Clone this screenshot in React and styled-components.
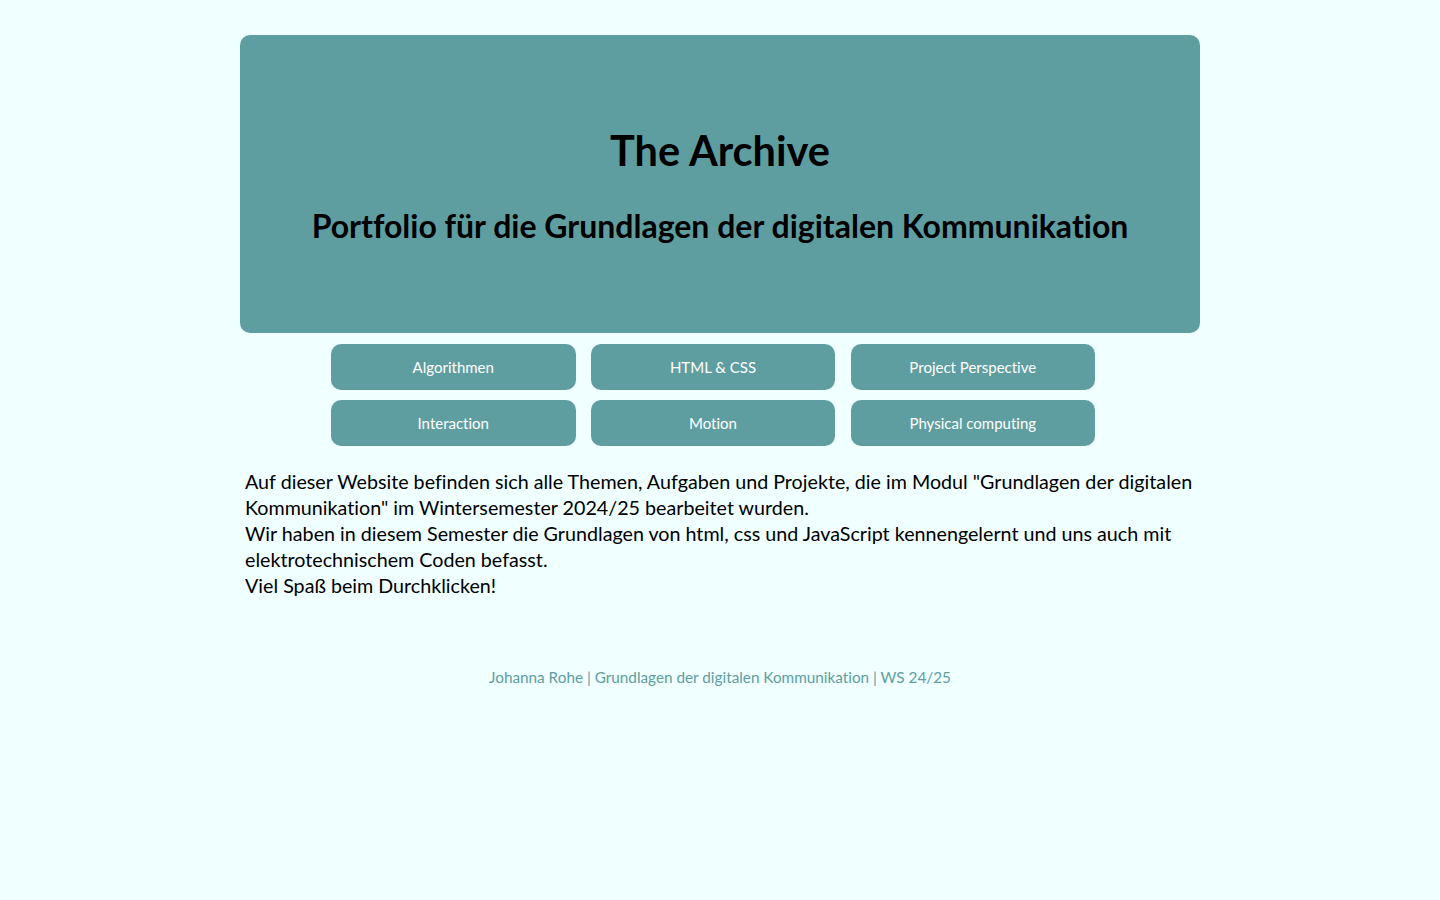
import React from "react";
import styled, { createGlobalStyle } from "styled-components";

const Global = createGlobalStyle`
  html, body { margin: 0; padding: 0; background: #F0FFFF; }
  body {
    font-family: Lato, "Noto Sans", sans-serif;
    color: #000;
    font-variant-ligatures: no-common-ligatures;
  }
`;

const Page = styled.div`
  width: 960px;
  margin: 0 auto;
  padding-top: 35px;
  display: flex;
  flex-direction: column;
  align-items: center;
`;

const Hero = styled.header`
  width: 100%;
  height: 298px;
  box-sizing: border-box;
  background: #5F9EA0;
  border-radius: 10px;
  display: flex;
  flex-direction: column;
  align-items: center;
  padding-top: 91px;
`;

const Title = styled.h1`
  margin: 0;
  font-size: 41.5px;
  font-weight: 700;
  line-height: 48px;
`;

const Subtitle = styled.h2`
  margin: 33px 0 0;
  font-size: 32px;
  font-weight: 700;
  line-height: 38px;
`;

const Nav = styled.nav`
  align-self: flex-start;
  margin: 11px 0 0 91px;
  display: grid;
  grid-template-columns: repeat(3, 244.5px);
  column-gap: 15.25px;
  row-gap: 10px;
`;

const NavButton = styled.a`
  height: 46px;
  border-radius: 10px;
  background: #5F9EA0;
  color: #fff;
  font-size: 15px;
  display: flex;
  align-items: center;
  justify-content: center;
  text-decoration: none;
  cursor: pointer;
`;

const Intro = styled.p`
  align-self: stretch;
  margin: 23px 0 0;
  padding: 0 5px;
  font-size: 19.7px;
  line-height: 26px;
`;

const Footer = styled.footer`
  margin-top: 68px;
  font-size: 15.3px;
  line-height: 20px;
  color: #5F9EA0;
  text-align: center;
`;

const links = [
  "Algorithmen",
  "HTML & CSS",
  "Project Perspective",
  "Interaction",
  "Motion",
  "Physical computing",
];

export default function App() {
  return (
    <>
      <Global />
      <Page>
        <Hero>
          <Title>The Archive</Title>
          <Subtitle>Portfolio für die Grundlagen der digitalen Kommunikation</Subtitle>
        </Hero>
        <Nav>
          {links.map((l) => (
            <NavButton key={l}>{l}</NavButton>
          ))}
        </Nav>
        <Intro>
          Auf dieser Website befinden sich alle Themen, Aufgaben und Projekte, die im Modul "Grundlagen der digitalen Kommunikation" im Wintersemester 2024/25 bearbeitet wurden.
          <br />
          Wir haben in diesem Semester die Grundlagen von html, css und JavaScript kennengelernt und uns auch mit elektrotechnischem Coden befasst.
          <br />
          Viel Spaß beim Durchklicken!
        </Intro>
        <Footer>Johanna Rohe | Grundlagen der digitalen Kommunikation | WS 24/25</Footer>
      </Page>
    </>
  );
}
